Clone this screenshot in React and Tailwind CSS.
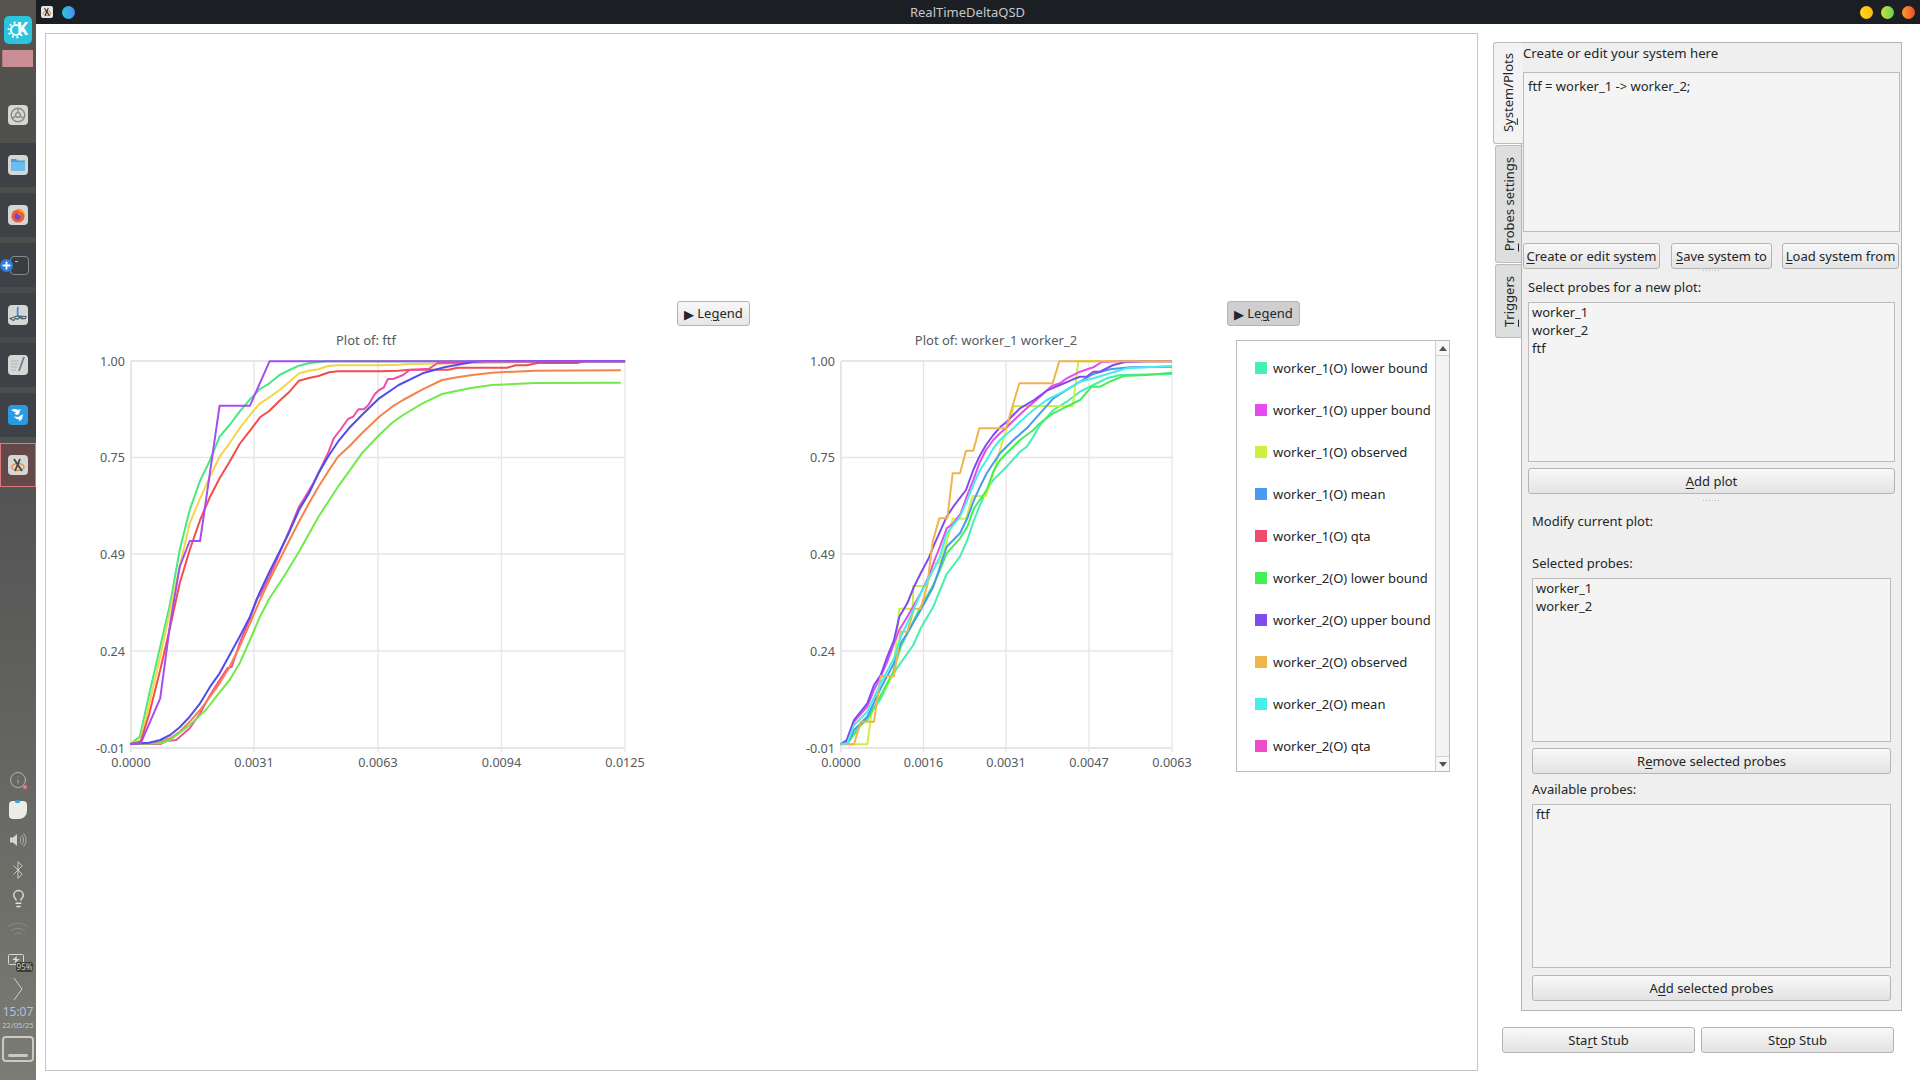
import React from "react";
import { Info, Bluetooth, Lightbulb, Wifi, Plus } from "lucide-react";

// curves traced by hand, plot 1 points are scaled by (2.306, 3), plot 2 by 3
const toPage1 = (p) => p.map(([x, y]) => `${(80 + x / 2.306).toFixed(1)},${(290 + y / 3).toFixed(1)}`).join(" ");
const toPage2 = (p) => p.map(([x, y]) => `${(830 + x / 3).toFixed(1)},${(350 + y / 3).toFixed(1)}`).join(" ");

const ftfCurves = [
  ["#47e87f", [[116,1362],[138,1340],[160,1210],[185,1070],[208,940],[230,780],[253,660],[277,572],[300,510],[322,440],[345,405],[368,365],[392,328],[415,297],[437,280],[460,255],[483,240],[505,227],[528,220],[550,216],[570,214],[1257,214]]],
  ["#f5d547", [[116,1362],[140,1350],[160,1240],[185,1100],[208,960],[230,830],[253,700],[277,625],[300,560],[322,500],[345,460],[368,415],[392,375],[415,340],[437,322],[460,300],[483,275],[505,250],[528,242],[550,238],[572,228],[595,226],[690,226],[735,224],[760,222],[900,220],[1000,217],[1100,215],[1257,214]]],
  ["#f24d4d", [[116,1362],[140,1355],[160,1270],[185,1140],[208,1010],[230,880],[253,780],[277,690],[300,620],[322,565],[345,515],[368,462],[392,422],[415,382],[437,362],[460,332],[483,305],[505,272],[528,264],[550,258],[575,247],[595,244],[690,244],[735,242],[760,239],[850,239],[870,233],[985,233],[1005,226],[1030,226],[1055,219],[1145,219],[1165,214],[1257,214]]],
  ["#f04da6", [[116,1362],[185,1362],[200,1353],[222,1350],[253,1315],[277,1270],[300,1215],[322,1170],[340,1135],[350,1130],[368,1060],[392,985],[408,925],[415,915],[437,860],[460,790],[483,720],[505,650],[515,630],[540,575],[572,490],[585,445],[600,420],[618,387],[630,380],[642,358],[655,358],[665,345],[680,312],[690,300],[700,293],[710,267],[722,267],[745,255],[760,240],[805,236],[825,219],[880,218],[905,214],[1257,214]]],
  ["#f58347", [[116,1362],[185,1356],[208,1345],[230,1325],[253,1295],[277,1260],[300,1220],[322,1180],[345,1130],[368,1070],[392,1000],[415,930],[437,870],[460,810],[483,750],[505,695],[528,640],[550,590],[572,545],[595,500],[620,470],[650,430],[690,380],[720,350],[745,330],[790,298],[835,270],[870,262],[905,255],[950,248],[1000,245],[1050,242],[1247,241]]],
  ["#70ea4b", [[116,1362],[185,1360],[208,1350],[253,1305],[290,1260],[320,1210],[345,1170],[368,1120],[392,1050],[415,980],[437,925],[470,860],[505,785],[550,680],[595,590],[620,545],[650,490],[690,435],[720,398],[745,375],[790,340],[835,312],[870,302],[905,293],[950,285],[1000,282],[1050,279],[1247,278]]],
  ["#4d4df0", [[116,1362],[160,1358],[185,1350],[208,1335],[230,1312],[253,1280],[277,1240],[300,1190],[322,1150],[345,1095],[368,1040],[392,980],[415,905],[437,845],[460,785],[483,725],[505,660],[528,610],[550,550],[572,500],[595,455],[620,415],[650,375],[690,325],[735,285],[790,250],[840,232],[905,216],[930,214],[1257,214]]],
  ["#a54df0", [[116,1362],[140,1360],[185,1225],[208,1000],[230,830],[253,753],[277,753],[322,347],[392,347],[437,214],[1257,214]]],
];

const workerCurves = [
  ["#46eeb0", [[32,1183],[60,1170],[112,1100],[150,1050],[190,970],[250,885],[272,835],[310,770],[350,672],[390,620],[412,570],[432,510],[450,465],[470,420],[490,390],[530,350],[570,305],[590,290],[610,260],[630,225],[670,180],[710,155],[750,125],[790,105],[830,85],[870,75],[1026,72]]],
  ["#cdf040", [[32,1183],[112,1183],[125,1085],[150,1040],[190,975],[208,776],[248,776],[250,708],[290,708],[310,640],[330,640],[350,575],[368,506],[408,506],[428,438],[468,438],[490,370],[510,300],[530,235],[552,168],[728,168],[745,34],[1026,34]]],
  ["#45ee58", [[32,1183],[52,1180],[92,1125],[112,1110],[150,1040],[190,965],[212,890],[232,850],[272,770],[310,705],[330,660],[350,610],[390,565],[412,530],[432,475],[470,420],[490,365],[510,330],[530,310],[570,270],[610,240],[630,220],[670,190],[710,170],[750,150],[785,110],[810,110],[840,95],[880,78],[950,75],[1026,68]]],
  ["#e64bf0", [[32,1183],[50,1175],[72,1115],[112,1070],[132,1020],[152,980],[172,935],[192,880],[208,840],[232,800],[272,730],[296,680],[310,640],[330,590],[350,535],[370,520],[392,490],[410,440],[430,390],[448,340],[468,300],[490,270],[510,250],[530,232],[552,210],[590,175],[630,140],[665,108],[690,100],[710,85],[750,65],[790,52],[815,36],[860,34],[1026,34]]],
  ["#4a9bf0", [[32,1183],[52,1180],[72,1140],[112,1100],[152,1015],[192,940],[212,880],[232,850],[272,780],[310,710],[330,650],[350,590],[390,550],[412,505],[432,450],[450,410],[470,370],[490,340],[510,310],[550,270],[590,235],[630,190],[670,145],[710,120],[750,95],[790,72],[840,58],[900,52],[1026,50]]],
  ["#7f4bf0", [[32,1183],[50,1170],[72,1110],[112,1060],[132,1005],[152,975],[172,920],[192,870],[208,800],[232,760],[252,710],[272,670],[296,625],[310,590],[330,545],[350,500],[370,470],[408,420],[430,360],[448,320],[468,285],[490,255],[510,232],[530,215],[550,195],[570,175],[612,150],[650,122],[690,105],[730,88],[750,80],[770,80],[790,65],[810,65],[850,45],[885,36],[950,34],[1026,34]]],
  ["#f0b54a", [[32,1183],[72,1183],[92,1115],[132,1115],[152,978],[192,978],[212,845],[232,845],[252,776],[272,776],[292,705],[308,575],[328,505],[352,505],[368,370],[390,370],[408,302],[430,302],[448,235],[528,235],[568,100],[668,100],[688,34],[1026,34]]],
  ["#46eee8", [[32,1183],[52,1180],[72,1125],[112,1085],[152,1000],[192,925],[212,860],[232,820],[272,730],[310,660],[330,620],[350,550],[390,500],[412,450],[432,400],[450,360],[470,330],[490,295],[510,270],[550,235],[570,215],[610,180],[650,150],[700,125],[750,95],[790,85],[840,70],[890,55],[950,52],[1026,48]]],
];

const legendItems = [
  ["worker_1(O) lower bound", "bg-[#46f0b0]"],
  ["worker_1(O) upper bound", "bg-[#e64bf0]"],
  ["worker_1(O) observed", "bg-[#cdf040]"],
  ["worker_1(O) mean", "bg-[#4a9bf0]"],
  ["worker_1(O) qta", "bg-[#f04a6e]"],
  ["worker_2(O) lower bound", "bg-[#45f055]"],
  ["worker_2(O) upper bound", "bg-[#7f4bf0]"],
  ["worker_2(O) observed", "bg-[#f0b54a]"],
  ["worker_2(O) mean", "bg-[#46f0e8]"],
  ["worker_2(O) qta", "bg-[#f04bc8]"],
];

const yTicks = [[361, "1.00"], [457.5, "0.75"], [554, "0.49"], [651, "0.24"], [748, "-0.01"]];

const Plot = ({ box, title, titleX, left, right, xTicks, curves, className }) => (
  <svg viewBox={box.join(" ")} width={box[2]} height={box[3]} className={className}>
    <g fill="#555a60" fontSize="12.6" fontFamily="'Noto Sans', sans-serif">
      <text x={titleX} y="344.5" textAnchor="middle" fontSize="13">{title}</text>
      {yTicks.map(([y, t]) => (
        <text key={t} x={left - 6} y={y + 4.5} textAnchor="end">{t}</text>
      ))}
      {xTicks.map(([x, t]) => (
        <text key={t} x={x} y="767" textAnchor="middle">{t}</text>
      ))}
    </g>
    {yTicks.map(([y], i) => (
      <line key={y} x1={left} x2={right} y1={y} y2={y} stroke="#e6e6e6" strokeWidth={i === 0 || i === 4 ? 2 : 1.3} />
    ))}
    {xTicks.map(([x], i) => (
      <line key={x} x1={x} x2={x} y1="361" y2="752" stroke="#e6e6e6" strokeWidth={i === 0 ? 2 : 1.3} />
    ))}
    {curves.map(([color, pts]) => (
      <polyline key={color} points={pts} fill="none" stroke={color} strokeWidth="2" strokeLinejoin="round" />
    ))}
  </svg>
);

// one letter underlined, like the Qt mnemonics
const Mn = ({ a = "", k, b = "" }) => (
  <span>{a}<span className="underline underline-offset-2">{k}</span>{b}</span>
);

const Button = ({ className = "", children }) => (
  <div className={`flex items-center justify-center pt-[1px] rounded-[3px] border border-[#b4b4b4] bg-gradient-to-b from-[#f8f8f8] to-[#e3e3e3] text-[13px] text-[#232629] whitespace-nowrap ${className}`}>
    {children}
  </div>
);

const ListBox = ({ className = "", lines }) => (
  <div className={`border border-[#bcbcbc] bg-[#f4f4f4] text-[13px] leading-[18px] text-[#232629] ${className}`}>
    {lines.map((l) => <div key={l}>{l}</div>)}
  </div>
);

const Legend = ({ pressed }) => (
  <div className={`w-[73px] h-[25px] flex items-center justify-center gap-[3px] pt-[1px] rounded-[3px] border border-[#b4b4b4] text-[13px] text-[#232629] ${pressed ? "bg-[#cfcfcf]" : "bg-gradient-to-b from-[#f8f8f8] to-[#e6e6e6]"}`}>
    <span className="text-[13px] leading-none">▶</span>
    <Mn a="Le" k="g" b="end" />
  </div>
);

const Splitter = ({ className = "" }) => (
  <div className={`flex justify-center gap-[1px] ${className}`}>
    {[0, 1, 2, 3, 4, 5].map((i) => <div key={i} className="w-[1px] h-[1px] bg-[#b5b5b5] mr-[1px]" />)}
  </div>
);

const Tile = ({ children }) => (
  <div className="w-5 h-5 rounded-[4px] bg-[#d6d6d4] flex items-center justify-center overflow-hidden">{children}</div>
);

const DockItem = ({ className = "", children }) => (
  <div className={`h-11 flex items-center justify-center ${className}`}>{children}</div>
);

const Dock = () => (
  <aside className="w-9 h-full shrink-0 flex flex-col bg-gradient-to-b from-[#55544e] via-[#48494b] via-30% to-[#7c7c74]">
    <div className="relative mt-4 ml-1 w-7 h-7 rounded-[5px] bg-[#2cc4dc] flex items-center justify-center text-white text-[17px] font-bold">
      <svg width="28" height="28" viewBox="0 0 28 28" className="absolute left-0 top-0">
        <circle cx="12" cy="14" r="5" fill="none" stroke="#fff" strokeWidth="2" />
        <circle cx="12" cy="14" r="7.4" fill="none" stroke="#fff" strokeWidth="2" strokeDasharray="2 2.6" />
      </svg>
      <span className="relative ml-[9px] -mt-[3px] leading-none">K</span>
    </div>
    <div className="mt-1.5 ml-0.5 w-[31px] h-[17px] bg-[#c98f94] border-l border-[#b47a80]" />
    <DockItem className="mt-[26px]">
      <Tile>
        <svg width="16" height="16" viewBox="0 0 16 16" fill="none" stroke="#8a8a88">
          <circle cx="8" cy="8" r="6.8" strokeWidth="1.4" />
          <circle cx="8" cy="8" r="2.4" strokeWidth="1.4" />
          <path d="M8 5.6V1.5M5.9 9.2 2.3 11.2M10.1 9.2l3.6 2" strokeWidth="1.4" />
        </svg>
      </Tile>
    </DockItem>
    <DockItem className="mt-1.5 bg-[#3e4247]">
      <Tile>
        <svg width="16" height="14" viewBox="0 0 16 14">
          <path d="M1 1h5l1.5 1.5H15V13H1z" fill="#3f9fdc" />
          <path d="M1 4h14v9H1z" fill="#6cbdec" />
        </svg>
      </Tile>
    </DockItem>
    <DockItem className="mt-1.5 bg-[#3e4247]">
      <Tile>
        <svg width="16" height="16" viewBox="0 0 16 16">
          <circle cx="8" cy="9" r="6.6" fill="#ee5f35" />
          <path d="M8 1.2c4.5.8 7 3.8 6.6 8-.6-2.8-2.2-4.2-4.6-4.4C9.4 3.5 8.8 2.4 8 1.2z" fill="#f8a52d" />
          <circle cx="7.5" cy="9.5" r="3.2" fill="#7b45c8" />
          <path d="M8 6.3c2 .2 3 1.5 2.8 3.2-.5-1.1-1.5-1.8-2.8-1.8z" fill="#f08a30" />
        </svg>
      </Tile>
    </DockItem>
    <DockItem className="mt-1.5 bg-[#3e4247] relative">
      <div className="w-[19px] h-[19px] rounded-[4px] border border-[#8a8a8a] bg-[#3a3d40] ml-0.5 flex items-start justify-start pl-1 pt-1">
        <div className="w-[3px] h-[1px] bg-[#bbb]" />
      </div>
      <div className="absolute left-0 top-[16px] w-[13px] h-[13px] rounded-full bg-[#2a7de1] flex items-center justify-center">
        <Plus size={11} strokeWidth={4} className="text-white" />
      </div>
    </DockItem>
    <DockItem className="mt-1.5 bg-[#3e4247]">
      <Tile>
        <svg width="18" height="18" viewBox="0 0 18 18" fill="none">
          <path d="M9 1c-.6 4-.6 7 0 9 1 1.4 3 1.6 5 1.4" stroke="#3f8fd8" strokeWidth="1.8" />
          <path d="M1 12.5 8 10l9 .4-.5 2-3.5.4-1.5-1.5-3 2-2-1-2 2.2z" stroke="#46606a" strokeWidth="1.1" />
        </svg>
      </Tile>
    </DockItem>
    <DockItem className="mt-1.5 bg-[#3e4247]">
      <Tile>
        <svg width="18" height="18" viewBox="0 0 18 18" fill="none">
          <path d="M2 5h8M2 8h7M2 11h6M2 14h5" stroke="#b4b4b2" />
          <path d="M15 1 10 15" stroke="#70808c" strokeWidth="1.8" />
        </svg>
      </Tile>
    </DockItem>
    <DockItem className="mt-1.5 bg-[#3e4247]">
      <div className="w-5 h-5 rounded-[4px] bg-[#2a9be0] flex items-center justify-center">
        <svg width="18" height="18" viewBox="0 0 18 18" fill="#fff">
          <path d="M2 4c3-1.5 5-1 7 0l3-1-1.5 2.5c.5 1.5-.5 3-2.5 3.5L5 7.5 7.5 7 2 4z" />
          <path d="M4.5 10.5 9.5 11l2.5-2 2.500-.5-1 2c0 2-1 3.500-3 5l-.5-2.500-1.500.5z" />
        </svg>
      </div>
    </DockItem>
    <DockItem className="mt-1.5 bg-[#65494a] border border-[#d87a7a]">
      <Tile>
        <svg width="16" height="16" viewBox="0 0 16 16" fill="none">
          <ellipse cx="8" cy="10" rx="6" ry="3.5" stroke="#e88a3a" strokeWidth="1.3" />
          <path d="M4 2l8 12M10 2 5 14" stroke="#444" strokeWidth="1.8" />
        </svg>
      </Tile>
    </DockItem>

    <div className="mt-auto flex flex-col items-center text-[#d8d8d4]">
      <div className="h-9 relative flex items-center">
        <Info size={18} strokeWidth={1} className="text-[#c9c9c5]" />
        <div className="absolute right-0 bottom-[9px] w-1 h-1 rounded-full bg-[#f07a7a]" />
      </div>
      <div className="h-6 flex items-center">
        <div className="relative w-[18px] h-[18px] rounded-[4px] rounded-br-[8px] bg-[#ecebe6]">
          <div className="absolute left-[6px] -top-[1px] w-[5px] h-[3px] rounded-sm bg-[#3aa0e0]" />
        </div>
      </div>
      <div className="h-9 flex items-center">
        <svg width="18" height="16" viewBox="0 0 18 16" fill="none">
          <path d="M1 5.5h3L8 2v12l-4-3.5H1z" fill="#d4d4d0" />
          <path d="M10.5 5a4 4 0 0 1 0 6M12.5 3a7 7 0 0 1 0 10M14.5 1.5a9.5 9.5 0 0 1 0 13" stroke="#b0b0ac" />
        </svg>
      </div>
      <div className="h-6 flex items-center"><Bluetooth size={20} strokeWidth={1.1} className="text-[#d4d4d0]" /></div>
      <div className="h-8 flex items-center"><Lightbulb size={19} strokeWidth={1.8} className="text-[#dededa]" /></div>
      <div className="h-8 flex items-center"><Wifi size={24} strokeWidth={0.9} className="text-[#8f8f89]" /></div>
      <div className="h-7 relative w-full">
        <svg width="18" height="12" viewBox="0 0 18 12" fill="none" className="absolute left-[8px] top-[8px]">
          <rect x="0.5" y="0.5" width="15" height="10" rx="1" stroke="#d8d8d4" />
          <path d="M9 2 4 6h3.5L6 9.5 12 5H8.5z" fill="#d8d8d4" />
        </svg>
        <div className="absolute left-[16px] top-[16px] w-[17px] h-[10px] rounded-[3px] bg-[#3c3c3a] text-center text-[8px] leading-[10px] text-[#c8d0d8]">95%</div>
      </div>
      <div className="h-[30px] flex items-center">
        <svg width="10" height="24" viewBox="0 0 10 24" fill="none">
          <path d="M1 1l8 11-8 11" stroke="#d0d0cc" />
        </svg>
      </div>
      <div className="h-4 leading-4 text-[12px] text-[#a9c4dd]">15:07</div>
      <div className="h-2.5 leading-[10px] text-[7.5px] text-[#bcc8d0]">22/05/25</div>
      <div className="mt-1.5 mb-[18px] w-8 h-[26px] rounded-[4px] border-2 border-[#c9c9c5] flex items-end justify-center pb-[3px]">
        <div className="w-5 h-[3px] rounded-sm bg-[#c9c9c5]" />
      </div>
    </div>
  </aside>
);

const TitleBar = () => (
  <header className="h-6 shrink-0 flex items-center bg-[#1b1e23] px-[5px]">
    <div className="w-3 h-3 rounded-[2px] bg-[#e4e4e4] flex items-center justify-center">
      <svg width="10" height="10" viewBox="0 0 16 16" fill="none">
        <ellipse cx="8" cy="10" rx="6" ry="3.5" stroke="#e88a3a" strokeWidth="1.6" />
        <path d="M4 2l8 12M10 2 5 14" stroke="#333" strokeWidth="2" />
      </svg>
    </div>
    <div className="ml-[9px] w-[13px] h-[13px] rounded-full bg-gradient-to-r from-[#2cc3d5] to-[#4a8cf0]" />
    <div className="flex-1 text-center pt-[1px] text-[13px] text-[#c6c8ca]">RealTimeDeltaQSD</div>
    <div className="flex gap-2">
      <div className="w-[13px] h-[13px] rounded-full bg-gradient-to-r from-[#fdd91c] to-[#fbb818]" />
      <div className="w-[13px] h-[13px] rounded-full bg-gradient-to-r from-[#c7e23a] to-[#5fd24c]" />
      <div className="w-[13px] h-[13px] rounded-full bg-gradient-to-r from-[#fa9a2f] to-[#ee4a2c]" />
    </div>
  </header>
);

const PlotArea = () => (
  <section className="w-[1433px] h-full border border-[#c4c4c4] flex items-start pt-[267px]">
    <Plot
      className="ml-[34px] mt-[29px] shrink-0"
      box={[80, 330, 590, 445]}
      title="Plot of: ftf"
      titleX={366}
      left={131}
      right={625}
      xTicks={[[131, "0.0000"], [254, "0.0031"], [378, "0.0063"], [501.5, "0.0094"], [625, "0.0125"]]}
      curves={ftfCurves.map(([c, p]) => [c, toPage1(p)])}
    />
    <div className="ml-[7px] shrink-0"><Legend /></div>
    <Plot
      className="ml-[40px] mt-[29px] shrink-0"
      box={[790, 330, 437, 445]}
      title="Plot of: worker_1 worker_2"
      titleX={996}
      left={841}
      right={1172}
      xTicks={[[841, "0.0000"], [923.5, "0.0016"], [1006, "0.0031"], [1089, "0.0047"], [1172, "0.0063"]]}
      curves={workerCurves.map(([c, p]) => [c, toPage2(p)])}
    />
    <div className="shrink-0 flex flex-col">
      <Legend pressed />
      <div className="ml-[9px] mt-[14px] w-[214px] h-[432px] border border-[#bcbcbc] bg-white flex">
        <div className="flex-1 pt-[6px]">
          {legendItems.map(([name, color]) => (
            <div key={name} className="h-[42px] flex items-center pl-[18px] gap-[6px] text-[13px] text-[#232629] whitespace-nowrap">
              <div className={`w-3 h-3 ${color}`} />
              <span className="pt-[1px]">{name}</span>
            </div>
          ))}
        </div>
        <div className="w-[14px] border-l border-[#d0d0d0] bg-[#f3f3f3] flex flex-col justify-between">
          <div className="h-[15px] bg-[#f8f8f8] border-b border-[#d0d0d0] flex items-center justify-center">
            <div className="w-0 h-0 border-x-[4px] border-x-transparent border-b-[5px] border-b-[#555]" />
          </div>
          <div className="h-[15px] bg-[#f8f8f8] border-t border-[#d0d0d0] flex items-center justify-center">
            <div className="w-0 h-0 border-x-[4px] border-x-transparent border-t-[5px] border-t-[#555]" />
          </div>
        </div>
      </div>
    </div>
  </section>
);

const Tabs = () => (
  <div className="w-7 shrink-0 flex flex-col text-[13px] text-[#232629]">
    <div className="relative z-10 w-[30px] h-[102px] rounded-l-[3px] border border-r-0 border-[#bcbcbc] bg-[#f3f3f3] flex items-center justify-center pl-[1px]">
      <div className="[writing-mode:vertical-rl] rotate-180 whitespace-nowrap"><Mn a="S" k="y" b="stem/Plots" /></div>
    </div>
    <div className="mt-[1px] ml-[2px] h-[118px] rounded-l-[3px] border border-r-0 border-[#bcbcbc] bg-[#dedede] flex items-center justify-center pl-[2px]">
      <div className="[writing-mode:vertical-rl] rotate-180 whitespace-nowrap"><Mn k="P" b="robes settings" /></div>
    </div>
    <div className="mt-[1px] ml-[2px] h-[74px] rounded-l-[3px] border border-r-0 border-[#bcbcbc] bg-[#dedede] flex items-center justify-center pl-[2px]">
      <div className="[writing-mode:vertical-rl] rotate-180 whitespace-nowrap"><Mn k="T" b="riggers" /></div>
    </div>
  </div>
);

const SidePanel = () => (
  <div className="w-[381px] h-[969px] shrink-0 border border-[#b4b4b4] bg-[#efefef] flex flex-col text-[13px] text-[#232629]">
    <div className="h-5 pl-[1px] leading-5 text-[13.2px]">Create or edit your system here</div>
    <div className="ml-[1px] mr-[1px] mt-[9px] h-[160px] border border-[#bcbcbc] bg-[#f4f4f4] pl-1 pt-[4px] leading-[18px]">ftf = worker_1 -&gt; worker_2;</div>
    <div className="ml-[1px] mt-[11px] flex">
      <Button className="w-[137px] h-[26px]"><Mn k="C" b="reate or edit system" /></Button>
      <Button className="ml-[11px] w-[101px] h-[26px]"><Mn k="S" b="ave system to" /></Button>
      <Button className="ml-[10px] w-[117px] h-[26px]"><Mn k="L" b="oad system from" /></Button>
    </div>
    <Splitter className="mt-[1px] h-[1px]" />
    <div className="ml-[6px] mt-1.5 h-5 leading-5">Select probes for a new plot:</div>
    <ListBox className="ml-[6px] w-[367px] mt-[5px] h-[160px] pl-[3px]" lines={["worker_1", "worker_2", "ftf"]} />
    <Button className="ml-[6px] w-[367px] mt-1.5 h-[26px]"><Mn k="A" b="dd plot" /></Button>
    <Splitter className="mt-1.5 h-[1px]" />
    <div className="ml-2.5 mt-2.5 h-5 leading-5">Modify current plot:</div>
    <div className="ml-2.5 mt-[22px] h-5 leading-5">Selected probes:</div>
    <ListBox className="ml-2.5 w-[359px] mt-[5px] h-[164px] pl-[3px]" lines={["worker_1", "worker_2"]} />
    <Button className="ml-2.5 w-[359px] mt-1.5 h-[26px]"><Mn a="R" k="e" b="move selected probes" /></Button>
    <div className="ml-2.5 mt-[5px] h-5 leading-5">Available probes:</div>
    <ListBox className="ml-2.5 w-[359px] mt-[5px] h-[164px] pl-[3px]" lines={["ftf"]} />
    <Button className="ml-2.5 w-[359px] mt-[7px] h-[26px]"><Mn a="A" k="d" b="d selected probes" /></Button>
  </div>
);

export default function App() {
  return (
    <div className="w-[1920px] h-[1080px] flex overflow-hidden bg-white font-['Noto_Sans',sans-serif]">
      <Dock />
      <div className="flex-1 flex flex-col min-w-0">
        <TitleBar />
        <main className="flex-1 min-h-0 flex pl-[9px] pt-[9px] pb-[9px]">
          <PlotArea />
          <div className="ml-[15px] pt-[9px] flex flex-col">
            <div className="flex">
              <Tabs />
              <SidePanel />
            </div>
            <div className="mt-4 ml-[9px] flex gap-1.5">
              <Button className="w-[193px] h-[26px]"><Mn a="Sta" k="r" b="t Stub" /></Button>
              <Button className="w-[193px] h-[26px]"><Mn a="St" k="o" b="p Stub" /></Button>
            </div>
          </div>
        </main>
      </div>
    </div>
  );
}
